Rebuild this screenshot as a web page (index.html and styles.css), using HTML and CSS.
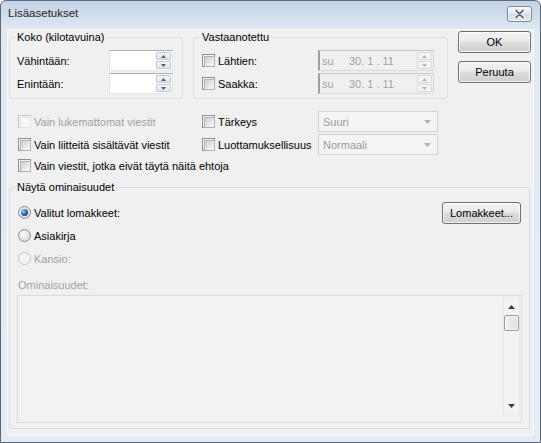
FILE: index.html
```html
<!DOCTYPE html>
<html lang="fi">
<head>
<meta charset="utf-8">
<title>Lisäasetukset</title>
<link rel="stylesheet" href="styles.css">
</head>
<body>
<div class="window">
  <div class="titlebar">
    <span class="title">Lisäasetukset</span>
    <span class="close">
      <svg width="13" height="10" viewBox="0 0 13 10">
        <path d="M3 1.5 L10 8.5 M10 1.5 L3 8.5" stroke="#fff" stroke-width="4" stroke-linecap="round"/>
        <path d="M3 1.5 L10 8.5 M10 1.5 L3 8.5" stroke="#5d6a7a" stroke-width="1.8" stroke-linecap="round"/>
      </svg>
    </span>
  </div>
  <div class="client">
    <div class="top">
      <fieldset class="grp g-size">
        <legend>Koko (kilotavuina)</legend>
        <div class="frow"><span class="flabel">Vähintään:</span>
          <div class="spin"><span class="spin-text"></span>
            <span class="spin-btns"><span class="sb sb-up"><svg width="5" height="3"><path d="M0 3 L2.5 0 L5 3Z" fill="#4f5f7a"/></svg></span><span class="sb sb-dn"><svg width="5" height="3"><path d="M0 0 L2.5 3 L5 0Z" fill="#4f5f7a"/></svg></span></span>
          </div>
        </div>
        <div class="frow"><span class="flabel">Enintään:</span>
          <div class="spin"><span class="spin-text"></span>
            <span class="spin-btns"><span class="sb sb-up"><svg width="5" height="3"><path d="M0 3 L2.5 0 L5 3Z" fill="#4f5f7a"/></svg></span><span class="sb sb-dn"><svg width="5" height="3"><path d="M0 0 L2.5 3 L5 0Z" fill="#4f5f7a"/></svg></span></span>
          </div>
        </div>
      </fieldset>
      <fieldset class="grp g-recv">
        <legend>Vastaanotettu</legend>
        <div class="frow">
          <label class="check wide"><span class="cb"></span>Lähtien:</label>
          <div class="date"><span class="date-text">su     30. 1 . 11</span>
            <span class="spin-btns dis"><span class="sb sb-up"><svg width="5" height="3"><path d="M0 3 L2.5 0 L5 3Z" fill="#b3b3b3"/></svg></span><span class="sb sb-dn"><svg width="5" height="3"><path d="M0 0 L2.5 3 L5 0Z" fill="#b3b3b3"/></svg></span></span>
          </div>
        </div>
        <div class="frow">
          <label class="check wide"><span class="cb"></span>Saakka:</label>
          <div class="date"><span class="date-text">su     30. 1 . 11</span>
            <span class="spin-btns dis"><span class="sb sb-up"><svg width="5" height="3"><path d="M0 3 L2.5 0 L5 3Z" fill="#b3b3b3"/></svg></span><span class="sb sb-dn"><svg width="5" height="3"><path d="M0 0 L2.5 3 L5 0Z" fill="#b3b3b3"/></svg></span></span>
          </div>
        </div>
      </fieldset>
      <div class="btncol">
        <span class="btn">OK</span>
        <span class="btn">Peruuta</span>
      </div>
    </div>

    <div class="opts">
      <label class="check disabled"><span class="cb"></span>Vain lukemattomat viestit</label>
      <label class="check"><span class="cb"></span>Tärkeys</label>
      <div class="combo"><span>Suuri</span><svg width="7" height="4"><path d="M0 0 L3.5 4 L7 0Z" fill="#b3b3b3"/></svg></div>

      <label class="check"><span class="cb"></span>Vain liitteitä sisältävät viestit</label>
      <label class="check"><span class="cb"></span>Luottamuksellisuus</label>
      <div class="combo"><span>Normaali</span><svg width="7" height="4"><path d="M0 0 L3.5 4 L7 0Z" fill="#b3b3b3"/></svg></div>

      <label class="check span2"><span class="cb"></span>Vain viestit, jotka eivät täytä näitä ehtoja</label>
    </div>

    <fieldset class="grp g-show">
      <legend>Näytä ominaisuudet</legend>
      <div class="rrow">
        <label class="radio"><span class="rb checked"></span>Valitut lomakkeet:</label>
        <span class="btn btn-forms">Lomakkeet...</span>
      </div>
      <div class="rrow">
        <label class="radio"><span class="rb"></span>Asiakirja</label>
      </div>
      <div class="rrow">
        <label class="radio disabled"><span class="rb"></span>Kansio:</label>
      </div>
      <div class="plabel">Ominaisuudet:</div>
      <div class="listbox">
        <div class="vscroll">
          <span class="sarrow"><svg width="7" height="4"><path d="M0 4 L3.5 0 L7 4Z" fill="#3c3c3c"/></svg></span>
          <span class="thumb"></span>
          <span class="track"></span>
          <span class="sarrow"><svg width="7" height="4"><path d="M0 0 L3.5 4 L7 0Z" fill="#3c3c3c"/></svg></span>
        </div>
      </div>
    </fieldset>
  </div>
</div>
</body>
</html>
```
FILE: styles.css
```css
* { box-sizing: border-box; }
html, body { margin: 0; padding: 0; }
body {
  width: 541px;
  height: 443px;
  overflow: hidden;
  background: #fff;
  font-family: "Liberation Sans", Arial, sans-serif;
  font-size: 11px;
  color: #000;
}

.window {
  width: 541px;
  height: 443px;
  border: 1px solid #5b6878;
  border-radius: 6px 6px 0 0;
  background: linear-gradient(#c3d3e7 0, #d4e0ee 18px, #e1e9f3 29px, #e4ebf4 100%);
  display: flex;
  flex-direction: column;
}

.titlebar {
  height: 29px;
  display: flex;
  align-items: flex-start;
  justify-content: space-between;
  padding: 5px 8px 0 7px;
}
.title {
  font-size: 11.5px;
  line-height: 15px;
  color: #1e1e1e;
}
.close {
  width: 25px;
  height: 16px;
  border: 1px solid #7c8898;
  border-radius: 3px;
  background: linear-gradient(#f4f7fb, #e1e8f1 50%, #d1dbe7 50%, #e0e7f0);
  box-shadow: inset 0 0 0 1px rgba(255,255,255,0.6);
  display: flex;
  align-items: center;
  justify-content: center;
}

.client {
  flex: 1;
  margin: 0 7px 7px;
  background: #f0f0f0;
  padding: 1px 1px 0 1px;
  box-shadow: 0 0 0 1px #f6f8fb;
  display: flex;
  flex-direction: column;
}

.top {
  display: flex;
  gap: 10px;
  align-items: flex-start;
}

.grp {
  margin: 0;
  min-width: 0;
  border: 1px solid #d5dfe5;
  border-radius: 3px;
  flex: none;
}
.grp legend {
  padding: 0 2px;
  margin-left: -2px;
  line-height: 13px;
}

.g-size {
  width: 174px;
  padding: 6px 8px 4px 7px;
  display: flex;
  flex-direction: column;
  gap: 2px;
}
.g-recv {
  width: 255px;
  padding: 6px 13px 4px 8px;
  display: flex;
  flex-direction: column;
  gap: 2px;
}
.frow {
  display: flex;
  align-items: center;
  height: 21px;
}
.flabel { width: 92px; }

.spin {
  width: 64px;
  height: 21px;
  background: #fff;
  border: 1px solid #e2e3ea;
  border-top-color: #abadb3;
  border-bottom-color: #e3e9ef;
  display: flex;
  justify-content: flex-end;
  padding: 1px;
}
.spin-btns {
  width: 15px;
  display: flex;
  flex-direction: column;
  gap: 1px;
}
.sb {
  flex: 1;
  border: 1px solid #c3cad3;
  border-radius: 1px;
  background: linear-gradient(#f4f6f9, #dfe4ea);
  display: flex;
  align-items: center;
  justify-content: center;
}
.spin-btns.dis .sb {
  border-color: #dadada;
  background: #f4f4f4;
}

.date {
  width: 116px;
  height: 21px;
  background: #f0f0f0;
  border: 1px solid #d9d9d9;
  border-left: 2px solid #a0a0a0;
  border-top-color: #c6c6c6;
  display: flex;
  align-items: center;
  padding: 1px 1px 1px 2px;
}
.date-text {
  flex: 1;
  white-space: pre;
  color: #a3a3a3;
}
.date .spin-btns { height: 17px; }

.check, .radio {
  display: flex;
  align-items: center;
  white-space: nowrap;
}
.check.wide { width: 116px; }
.cb {
  width: 13px;
  height: 13px;
  border: 1px solid #8e8f8f;
  background: #f4f4f4;
  padding: 1px;
  margin-right: 3px;
  flex: none;
}
.cb::after {
  content: "";
  display: block;
  width: 9px;
  height: 9px;
  border: 1px solid #aeb3b9;
  background: linear-gradient(135deg, #c9cdd3, #eeeff1 70%, #f8f8f8);
}
.check.disabled { color: #a0a0a0; }
.check.disabled .cb { border-color: #c4c4c4; background: #f7f7f7; }
.check.disabled .cb::after { border-color: #e4e4e4; background: #f7f7f7; }

.btncol {
  width: 73px;
  display: flex;
  flex-direction: column;
  gap: 8px;
}
.btn {
  height: 22px;
  border: 1px solid #707070;
  border-radius: 3px;
  background: linear-gradient(#f2f2f2 0%, #ebebeb 45%, #dddddd 50%, #cfcfcf 100%);
  box-shadow: inset 0 0 0 1px rgba(255,255,255,0.75);
  display: flex;
  align-items: center;
  justify-content: center;
}

.opts {
  margin: 12px 0 0 9px;
  display: grid;
  grid-template-columns: 184px 116px 120px;
  grid-template-rows: 21px 21px 17px;
  row-gap: 2px;
  align-items: center;
}
.span2 { grid-column: 1 / 3; }

.combo {
  height: 21px;
  border: 1px solid #d4d4d4;
  background: #f4f4f4;
  color: #9a9a9a;
  display: flex;
  align-items: center;
  justify-content: space-between;
  padding: 0 6px 0 4px;
}

.g-show {
  margin-top: 7px;
  width: 521px;
  padding: 7px 7px 5px 7px;
}
.rrow {
  height: 23px;
  display: flex;
  align-items: center;
  justify-content: space-between;
}
.radio { margin-left: 1px; }
.rb {
  width: 13px;
  height: 13px;
  border-radius: 50%;
  border: 1px solid #8e8f8f;
  background: radial-gradient(circle at 40% 40%, #fbfbfb, #dcdcdc 70%, #c6c6c6);
  margin-right: 3px;
  flex: none;
  display: flex;
  align-items: center;
  justify-content: center;
}
.rb.checked::after {
  content: "";
  width: 7px;
  height: 7px;
  border-radius: 50%;
  background: radial-gradient(circle at 35% 35%, #a6d3f6 0, #2d6cb0 45%, #0e2f5c 100%);
}
.radio.disabled { color: #a0a0a0; }
.radio.disabled .rb { border-color: #c4c4c4; background: #f4f4f4; }

.btn-forms {
  width: 79px;
  margin-right: 1px;
}

.plabel {
  margin: 9px 0 0 1px;
  line-height: 13px;
  color: #a3a3a3;
}
.listbox {
  margin-top: 3px;
  height: 128px;
  border: 1px solid #dcdcdc;
  background: #f2f2f2;
  display: flex;
  justify-content: flex-end;
  padding: 1px 1px 7px 1px;
}
.vscroll {
  width: 17px;
  border: 1px solid #e6e6e6;
  background: #f3f3f3;
  display: flex;
  flex-direction: column;
  align-items: center;
}
.sarrow {
  height: 17px;
  width: 15px;
  display: flex;
  align-items: center;
  justify-content: center;
}
.thumb {
  width: 15px;
  height: 16px;
  border: 1px solid #9a9a9a;
  border-radius: 2px;
  background: linear-gradient(90deg, #f0f0f0, #e0e0e0);
  box-shadow: inset 0 0 0 1px #fafafa;
}
.track { flex: 1; }
```
